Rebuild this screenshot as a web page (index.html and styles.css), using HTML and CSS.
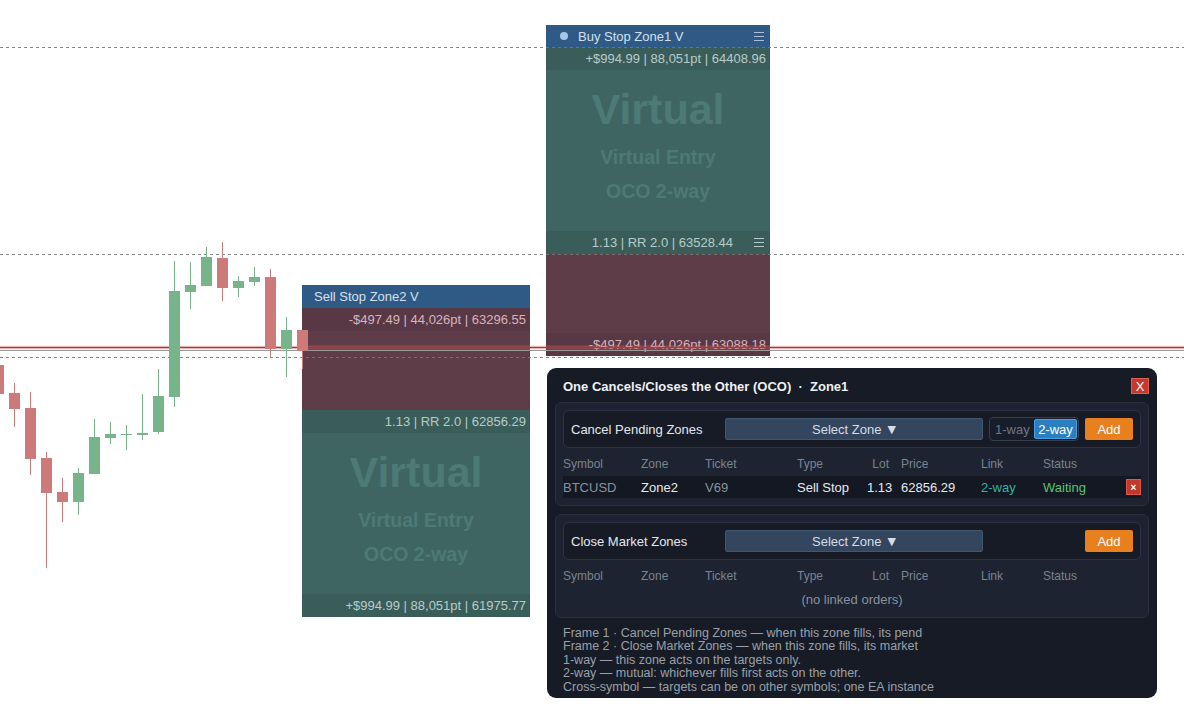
FILE: index.html
```html
<!DOCTYPE html>
<html>
<head>
<meta charset="utf-8">
<link rel="stylesheet" href="styles.css">
</head>
<body>
<div class="chart">

  <div class="zone zone-buy">
    <div class="zone-head head-buy">
      <span class="dot"></span>
      <span class="zone-title">Buy Stop Zone1 V</span>
      <svg class="menu menu-head" viewBox="0 0 10 9" width="10" height="9"><path d="M0 0.5H10M0 4.5H10M0 8.5H10" stroke="currentColor" stroke-width="1"/></svg>
    </div>
    <div class="tp">
      <div class="strip strip-tp"><span>+$994.99 | 88,051pt | 64408.96</span></div>
      <div class="virt">
        <div class="virt-big">Virtual</div>
        <div class="virt-sub">Virtual Entry</div>
        <div class="virt-sub virt-oco">OCO 2-way</div>
      </div>
      <div class="strip strip-tp strip-menu"><span>1.13 | RR 2.0 | 63528.44</span>
        <svg class="menu menu-strip" viewBox="0 0 10 9" width="10" height="9"><path d="M0 0.5H10M0 4.5H10M0 8.5H10" stroke="currentColor" stroke-width="1"/></svg>
      </div>
    </div>
    <div class="sl">
      <div class="sl-fill"></div>
      <div class="strip strip-sl"><span>-$497.49 | 44,026pt | 63088.18</span></div>
    </div>
  </div>

  <div class="zone zone-sell">
    <div class="zone-head head-sell">
      <span class="zone-title">Sell Stop Zone2 V</span>
    </div>
    <div class="sl">
      <div class="strip strip-sl"><span>-$497.49 | 44,026pt | 63296.55</span></div>
      <div class="sl-fill"></div>
    </div>
    <div class="tp">
      <div class="strip strip-tp"><span>1.13 | RR 2.0 | 62856.29</span></div>
      <div class="virt">
        <div class="virt-big">Virtual</div>
        <div class="virt-sub">Virtual Entry</div>
        <div class="virt-sub virt-oco">OCO 2-way</div>
      </div>
      <div class="strip strip-tp"><span>+$994.99 | 88,051pt | 61975.77</span></div>
    </div>
  </div>

  <svg class="overlay" width="1184" height="720" viewBox="0 0 1184 720">
    <g class="dash">
      <line x1="0" y1="47.5" x2="1184" y2="47.5"/>
      <line x1="0" y1="254.5" x2="1184" y2="254.5"/>
      <line x1="0" y1="357.5" x2="1184" y2="357.5"/>
    </g>
    <rect x="0" y="345.5" width="1184" height="4" fill="#e8a0a0" opacity="0.25"/>
    <line x1="0" y1="347.5" x2="1184" y2="347.5" stroke="#c42a2a" stroke-width="1.4"/>
    <line x1="0" y1="350.5" x2="1184" y2="350.5" stroke="#9a9a9a" stroke-width="1"/>
    <g class="bear">
      <rect x="-7" y="365" width="11" height="29"/>
      <rect x="14" y="383" width="1" height="44"/><rect x="9" y="393" width="11" height="16"/>
      <rect x="30" y="392" width="1" height="83"/><rect x="25" y="408" width="11" height="51"/>
      <rect x="46" y="452" width="1" height="116"/><rect x="41" y="458" width="11" height="35"/>
      <rect x="62" y="478" width="1" height="44"/><rect x="57" y="492" width="11" height="10"/>
      <rect x="222" y="242" width="1" height="59"/><rect x="217" y="258" width="11" height="30"/>
      <rect x="270" y="269" width="1" height="89"/><rect x="265" y="277" width="11" height="72"/>
      <rect x="302" y="330" width="1" height="39"/><rect x="297" y="330" width="11" height="21"/>
    </g>
    <g class="bull">
      <rect x="78" y="468" width="1" height="47"/><rect x="73" y="473" width="11" height="29"/>
      <rect x="94" y="419" width="1" height="55"/><rect x="89" y="437" width="11" height="37"/>
      <rect x="110" y="422" width="1" height="22"/><rect x="105" y="434" width="11" height="4"/>
      <rect x="126" y="425" width="1" height="25"/><rect x="121" y="434" width="11" height="1"/>
      <rect x="142" y="394" width="1" height="46"/><rect x="137" y="433" width="11" height="2"/>
      <rect x="158" y="369" width="1" height="65"/><rect x="153" y="396" width="11" height="36"/>
      <rect x="174" y="261" width="1" height="146"/><rect x="169" y="291" width="11" height="106"/>
      <rect x="190" y="262" width="1" height="47"/><rect x="185" y="285" width="11" height="7"/>
      <rect x="206" y="247" width="1" height="39"/><rect x="201" y="257" width="11" height="29"/>
      <rect x="238" y="276" width="1" height="21"/><rect x="233" y="281" width="11" height="7"/>
      <rect x="254" y="267" width="1" height="19"/><rect x="249" y="277" width="11" height="5"/>
      <rect x="286" y="317" width="1" height="60"/><rect x="281" y="330" width="11" height="19"/>
    </g>
  </svg>

  <div class="oco">
    <div class="oco-title">
      <span>One Cancels/Closes the Other (OCO)&nbsp;&nbsp;·&nbsp;&nbsp;Zone1</span>
      <span class="close-btn">X</span>
    </div>

    <div class="frame">
      <div class="ctrl">
        <span class="ctrl-label">Cancel Pending Zones</span>
        <span class="select">Select Zone <span class="tri">▼</span></span>
        <span class="toggle"><span class="opt">1-way</span><span class="opt opt-on">2-way</span></span>
        <span class="add">Add</span>
      </div>
      <div class="grid thead">
        <span>Symbol</span><span>Zone</span><span>Ticket</span><span>Type</span><span class="r">Lot</span><span class="pl">Price</span><span>Link</span><span>Status</span><span></span>
      </div>
      <div class="grid trow">
        <span class="dim">BTCUSD</span><span>Zone2</span><span class="dim">V69</span><span>Sell Stop</span><span class="r">1.13</span><span class="pl">62856.29</span><span class="link">2-way</span><span class="wait">Waiting</span><span class="del-cell"><span class="del">×</span></span>
      </div>
    </div>

    <div class="frame">
      <div class="ctrl">
        <span class="ctrl-label">Close Market Zones</span>
        <span class="select">Select Zone <span class="tri">▼</span></span>
        <span class="add add-auto">Add</span>
      </div>
      <div class="grid thead">
        <span>Symbol</span><span>Zone</span><span>Ticket</span><span>Type</span><span class="r">Lot</span><span class="pl">Price</span><span>Link</span><span>Status</span><span></span>
      </div>
      <div class="empty">(no linked orders)</div>
    </div>

    <div class="notes">
      <div>Frame 1 · Cancel Pending Zones — when this zone fills, its pend</div>
      <div>Frame 2 · Close Market Zones — when this zone fills, its market</div>
      <div>1-way — this zone acts on the targets only.</div>
      <div>2-way — mutual: whichever fills first acts on the other.</div>
      <div>Cross-symbol — targets can be on other symbols; one EA instance</div>
    </div>
  </div>

</div>
</body>
</html>
```

FILE: styles.css
```css
html, body {
  margin: 0;
  padding: 0;
  background: #ffffff;
}

body {
  font-family: "Liberation Sans", Arial, sans-serif;
  width: 1184px;
  height: 720px;
  overflow: hidden;
}

.chart {
  position: relative;
  width: 1184px;
  height: 720px;
}

/* ---------- zones ---------- */
.zone {
  position: absolute;
  display: flex;
  flex-direction: column;
  font-size: 13px;
}

.zone-buy {
  left: 546px;
  top: 25px;
  width: 224px;
}

.zone-sell {
  left: 302px;
  top: 285px;
  width: 228px;
}

.zone-head {
  background: #2e5a85;
  color: #d3e0ee;
  display: flex;
  align-items: center;
  box-sizing: border-box;
}

.head-buy {
  height: 22px;
  padding-left: 14px;
  padding-right: 6px;
}

.head-sell {
  height: 23px;
  padding-left: 12px;
}

.dot {
  width: 8px;
  height: 8px;
  border-radius: 50%;
  background: #a8c6e6;
  margin-right: 10px;
}

.zone-title {
  flex: 1;
}

.menu {
  display: block;
}

.menu-head {
  color: #a9c0d8;
}

.tp {
  background: #3f6562;
  display: flex;
  flex-direction: column;
  height: 207px;
}

.sl {
  background: #5e3c48;
  display: flex;
  flex-direction: column;
  height: 102px;
}

.sl-fill {
  flex: 1;
}

.strip {
  height: 23px;
  display: flex;
  align-items: center;
  justify-content: flex-end;
  padding-right: 4px;
  box-sizing: border-box;
  flex: none;
}

.strip-tp {
  background: #3b5d5a;
  color: #b6ccc9;
}

.strip-sl {
  background: #593845;
  color: #d8b3bc;
}

.strip-menu {
  padding-right: 6px;
}

.menu-strip {
  color: #b6ccc9;
  margin-left: 21px;
}

.virt {
  flex: 1;
  display: flex;
  flex-direction: column;
  align-items: center;
  color: #4d7976;
  font-weight: bold;
  padding-top: 15px;
  box-sizing: border-box;
}

.virt-big {
  font-size: 43px;
  line-height: 48px;
}

.virt-sub {
  font-size: 19.5px;
  line-height: 24px;
  margin-top: 12px;
}

.virt-oco {
  margin-top: 10px;
}

/* ---------- chart overlay ---------- */
.overlay {
  position: absolute;
  left: 0;
  top: 0;
  pointer-events: none;
}

.dash line {
  stroke: #777777;
  stroke-width: 1;
  stroke-dasharray: 3 3;
  opacity: 0.9;
}

.bear rect {
  fill: #cd7a7a;
}

.bull rect {
  fill: #77b489;
}

/* ---------- OCO panel ---------- */
.oco {
  position: absolute;
  left: 547px;
  top: 368px;
  width: 610px;
  height: 330px;
  box-sizing: border-box;
  background: #161b25;
  border-radius: 9px;
  padding: 10px 8px 0 8px;
  color: #e4e8ee;
}

.oco-title {
  height: 16px;
  display: flex;
  align-items: center;
  justify-content: space-between;
  padding-left: 8px;
  margin-bottom: 8px;
  font-size: 13px;
  font-weight: bold;
  color: #eef1f5;
}

.close-btn {
  width: 18px;
  height: 16px;
  box-sizing: border-box;
  background: #c5382c;
  border: 1px solid #e0604f;
  color: #ffffff;
  font-weight: normal;
  font-size: 13px;
  display: flex;
  align-items: center;
  justify-content: center;
}

.frame {
  background: #1d2330;
  border: 1px solid #283040;
  border-radius: 6px;
  padding: 7px 7px 7px 7px;
  margin-bottom: 8px;
}

.ctrl {
  height: 38px;
  box-sizing: border-box;
  background: #161b25;
  border: 1px solid #2c3444;
  border-radius: 6px;
  display: flex;
  align-items: center;
  padding: 0 7px;
}

.ctrl-label {
  width: 154px;
  font-size: 13px;
  color: #e4e8ee;
}

.select {
  width: 258px;
  height: 22px;
  box-sizing: border-box;
  background: #33465e;
  border: 1px solid #41566f;
  border-radius: 2px;
  color: #d6dde6;
  font-size: 13px;
  display: flex;
  align-items: center;
  justify-content: center;
}

.tri {
  font-family: "DejaVu Sans", sans-serif;
  font-size: 11px;
  margin-left: 6px;
}

.toggle {
  margin-left: 6px;
  width: 90px;
  height: 24px;
  box-sizing: border-box;
  border: 1px solid #353e4d;
  border-radius: 4px;
  background: #181e29;
  display: flex;
  align-items: center;
  justify-content: space-between;
  padding: 0 1px 0 5px;
  font-size: 13px;
}

.opt {
  color: #6f7784;
}

.opt-on {
  background: #2a7fc2;
  border: 1px solid #4b9fe0;
  color: #ffffff;
  height: 20px;
  box-sizing: border-box;
  width: 43px;
  display: flex;
  align-items: center;
  justify-content: center;
  border-radius: 2px;
}

.add {
  margin-left: 6px;
  width: 48px;
  height: 22px;
  background: #e8801f;
  color: #ffffff;
  font-size: 13px;
  display: flex;
  align-items: center;
  justify-content: center;
  border-radius: 2px;
}

.add-auto {
  margin-left: auto;
}

.grid {
  display: grid;
  grid-template-columns: 78px 64px 92px 70px 22px 92px 62px 82px 16px;
  align-items: center;
}

.thead {
  height: 16px;
  margin-top: 8px;
  font-size: 12px;
  color: #7b838f;
}

.trow {
  height: 22px;
  margin-top: 4px;
  background: #131822;
  font-size: 13px;
  color: #e6e9ee;
}

.r {
  text-align: right;
}

.pl {
  padding-left: 12px;
}

.dim {
  color: #8a929e;
}

.link {
  color: #38b0a0;
}

.wait {
  color: #5cc46c;
}

.del-cell {
  display: flex;
  justify-content: flex-end;
}

.del {
  width: 15px;
  height: 16px;
  background: #c0392b;
  border: 1px solid #d85a4a;
  box-sizing: border-box;
  color: #ffffff;
  font-size: 10px;
  font-weight: bold;
  display: flex;
  align-items: center;
  justify-content: center;
}

.empty {
  height: 22px;
  margin-top: 4px;
  display: flex;
  align-items: center;
  justify-content: center;
  font-size: 13px;
  color: #8a929e;
}

.notes {
  padding-left: 8px;
  padding-top: 1px;
  font-size: 12.5px;
  line-height: 13.4px;
  color: #9aa0aa;
}
```
